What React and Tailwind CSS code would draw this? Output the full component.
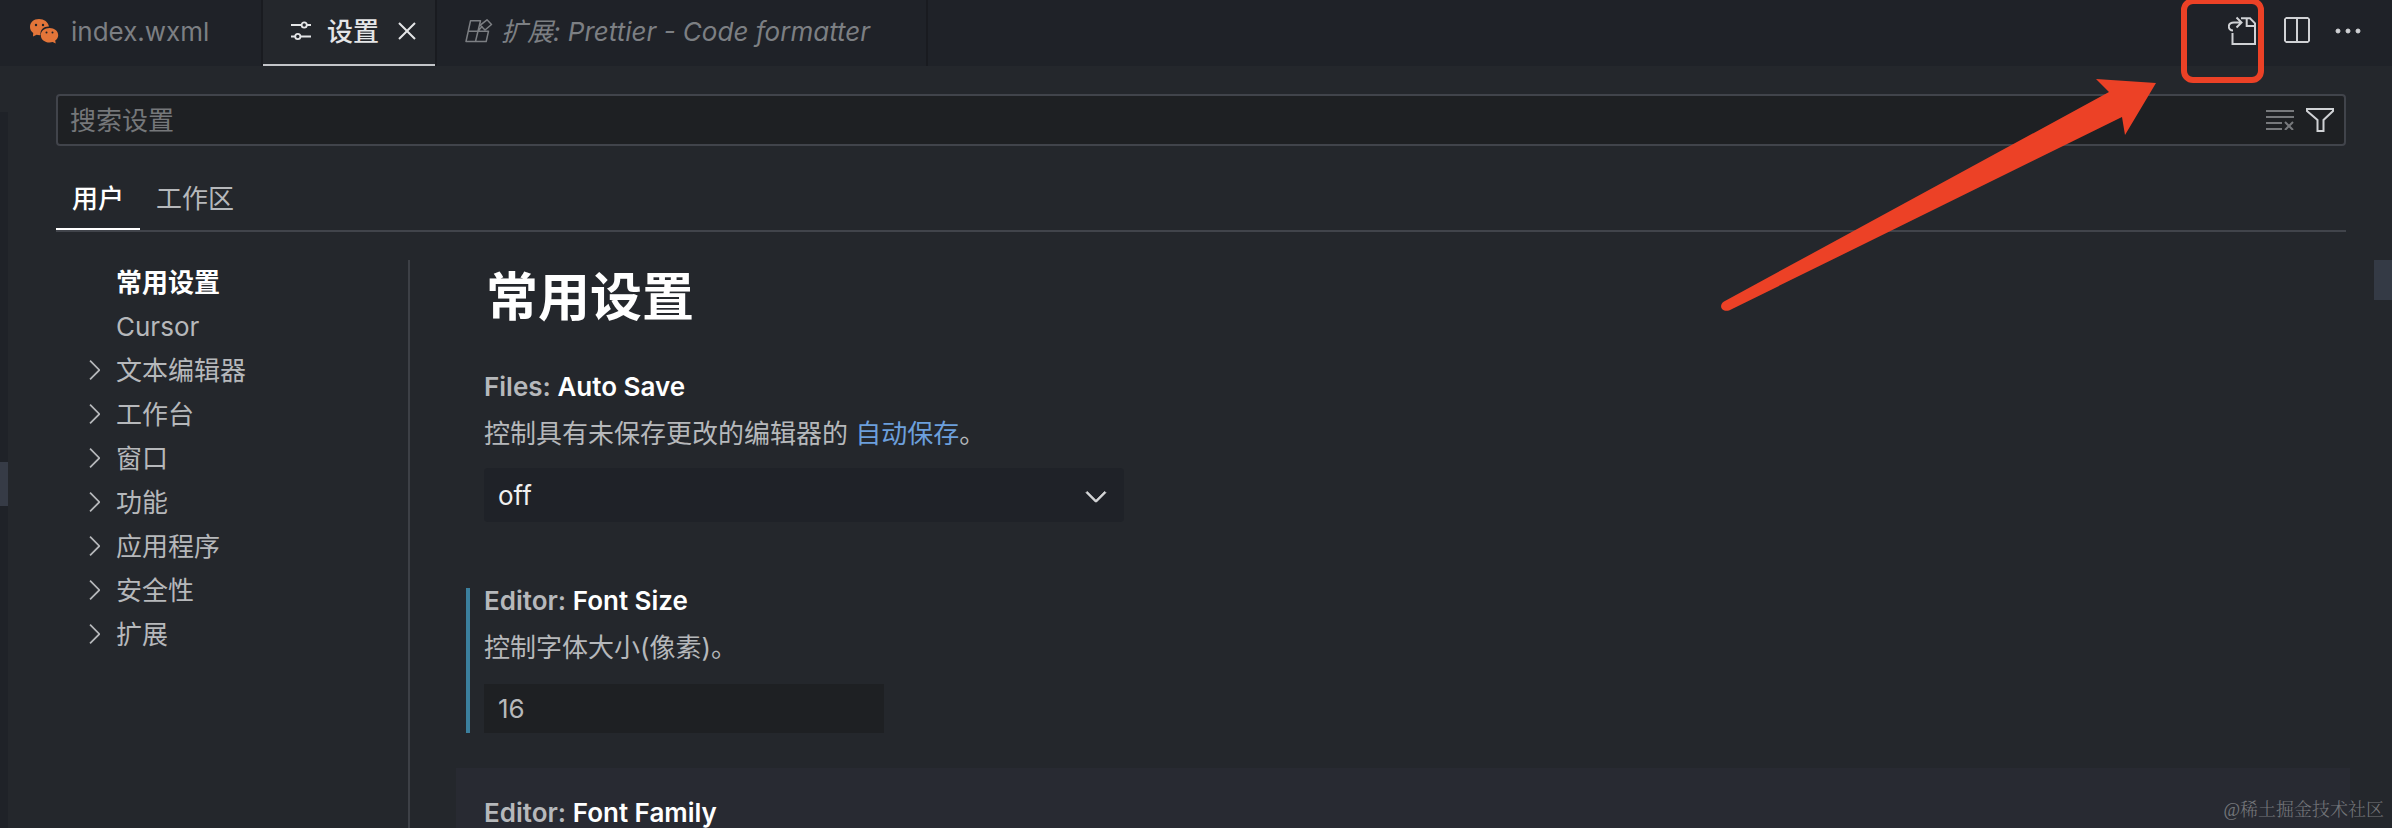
import React, { useState } from "react";
import { VscChevronRight, VscChevronDown, VscClose, VscSplitHorizontal, VscEllipsis } from "react-icons/vsc";

const treeItems = [
  { name: "常用设置", active: true },
  { name: "Cursor" },
  { name: "文本编辑器", children: true },
  { name: "工作台", children: true },
  { name: "窗口", children: true },
  { name: "功能", children: true },
  { name: "应用程序", children: true },
  { name: "安全性", children: true },
  { name: "扩展", children: true },
];

const WechatIcon = () => (
  <svg width="30" height="28" viewBox="0 0 30 28" fill="#e37539">
    <path d="M10 2C4.500 2 1 5.500 1 10c0 2.600 1.300 4.600 3.200 6L4 19.500l3.600-1.800c1.200.4 2.600.5 3.900.4C10.800 12.500 15 9.300 20 9.500 19.300 5 15 2 10 2z" />
    <path d="M20.500 11c-5 0-8.700 3-8.700 7.200 0 4.300 3.900 7.300 8.700 7.300 1.100 0 2.200-.2 3.200-.5l3 1.500-.5-3c1.900-1.300 3-3.100 3-5.300 0-4.200-3.800-7.200-8.700-7.200z" />
    <g fill="#1f2228">
      <circle cx="7" cy="8" r="1.200" />
      <circle cx="14" cy="8" r="1.200" />
      <circle cx="17.500" cy="15.500" r="1" />
      <circle cx="23.500" cy="15.500" r="1" />
    </g>
  </svg>
);

const SlidersIcon = () => (
  <svg width="20" height="20" viewBox="0 0 20 20" fill="none" stroke="currentColor" strokeWidth="1.800">
    <path d="M0 4h10.500M16 4h4M0 15.500h4M9.500 15.500H20" />
    <circle cx="13.200" cy="4" r="2.600" />
    <circle cx="6.800" cy="15.500" r="2.600" />
  </svg>
);

const ExtensionsIcon = () => (
  <svg width="28" height="24" viewBox="0 0 28 24" fill="none" stroke="currentColor" strokeWidth="1.500" strokeLinejoin="round">
    <path d="M5.500 1.800h10L10.500 22.500H1zM3.200 12.200H23.500l-2.300 10.300H10.500M12.800 12.200l4.500-5" />
    <path d="M22 .8l4.500 4.700-6.500 5.500-4.700-4.800z" />
  </svg>
);

const GoToFileIcon = () => (
  <svg width="32" height="32" viewBox="0 0 32 32" fill="none" stroke="currentColor" strokeWidth="2">
    <path d="M13 3.300h9l5 5V29H4.500V18" />
    <path d="M18.700 3v8H27" />
    <path d="M8.500 2.500l5 5-5 5M13 7.500H6C-1 7.500-.5 15.500 5 15.500" />
  </svg>
);

const ClearIcon = () => (
  <svg width="28" height="20" viewBox="0 0 28 20" fill="none" stroke="currentColor" strokeWidth="2">
    <path d="M0 1h28M0 7h28M0 13h16M0 19h16M19 12l8 8M27 12l-8 8" />
  </svg>
);

const FilterIcon = () => (
  <svg width="28" height="24" viewBox="0 0 28 24" fill="none" stroke="currentColor" strokeWidth="2">
    <path d="M1 1h26v2l-9.500 9v11h-6V12L1 3z" />
  </svg>
);

const SettingTitle = ({ category, label, htmlFor }) => (
  <label htmlFor={htmlFor} className="block font-semibold leading-[26px] text-[#b6b8bb]">
    {category}: <span className="text-white">{label}</span>
  </label>
);

const EditorTabs = () => (
  <header className="flex h-[66px] shrink-0 bg-[#1f2228] text-[#7c7f83]">
    <button type="button" className="flex w-[263px] items-center gap-3 border-r-2 border-[#191b20] pb-1 pl-[29px]">
      <WechatIcon />
      index.wxml
    </button>
    <button type="button" className="flex w-[172px] items-center border-b-2 border-[#c3c5c9] bg-[#24272c] pb-[2px] pl-7 text-[#e4e5e7]">
      <SlidersIcon />
      <span className="ml-4 font-medium">设置</span>
      <VscClose className="ml-3 size-8" />
    </button>
    <button type="button" className="flex w-[493px] items-center gap-2 border-x-2 border-[#191b20] pb-1 pl-7 italic">
      <ExtensionsIcon />
      扩展: Prettier - Code formatter
    </button>
    <div className="ml-auto flex items-center gap-5 pb-1 pr-7 text-[#d0d2d5]">
      <button type="button" aria-label="打开设置(json)"><GoToFileIcon /></button>
      <button type="button" aria-label="向右拆分编辑器"><VscSplitHorizontal className="size-8" /></button>
      <button type="button" aria-label="更多操作..."><VscEllipsis className="size-8" strokeWidth="0.5" /></button>
    </div>
  </header>
);

const SettingsTree = () => (
  <nav className="w-[354px] shrink-0 border-r-2 border-[#3d4046]">
    <ul>
      {treeItems.map((item) => (
        <li key={item.name}>
          <button
            type="button"
            className={item.active ? "flex h-11 items-center font-bold text-white" : "flex h-11 items-center text-[#b6b8bb]"}
          >
            <span className="flex w-[60px] justify-end pr-[6px]">
              {item.children && <VscChevronRight className="size-8" />}
            </span>
            {item.name}
          </button>
        </li>
      ))}
    </ul>
  </nav>
);

const SettingsList = () => {
  const [autoSave, setAutoSave] = useState("off");
  const [fontSize, setFontSize] = useState("16");

  return (
    <main className="ml-[46px] min-w-0 grow text-[#b6b8bb]">
      <h1 className="pl-[30px] pt-[6px] text-[52px] font-bold leading-[64px] text-white">常用设置</h1>

      <section className="mt-11 pl-7">
        <SettingTitle category="Files" label="Auto Save" htmlFor="autoSave" />
        <p className="mt-[18px] leading-8">
          控制具有未保存更改的编辑器的 <a href="#auto-save" className="text-[#6c9fdc]">自动保存</a>。
        </p>
        <div className="relative mt-[18px] w-[640px]">
          <select
            id="autoSave"
            value={autoSave}
            onChange={(e) => setAutoSave(e.target.value)}
            className="h-[54px] w-full appearance-none rounded bg-[#1f2228] px-[14px] text-[#f0f0f0]"
          >
            <option value="off">off</option>
            <option value="afterDelay">afterDelay</option>
            <option value="onFocusChange">onFocusChange</option>
            <option value="onWindowChange">onWindowChange</option>
          </select>
          <VscChevronDown className="pointer-events-none absolute right-3 top-3 size-8 text-[#d8d9db]" strokeWidth="0.4" />
        </div>
      </section>

      <section className="ml-[10px] mt-[66px] border-l-4 border-[#3b7f9d] pl-[14px]">
        <SettingTitle category="Editor" label="Font Size" htmlFor="fontSize" />
        <p className="mt-[18px] leading-8">控制字体大小(像素)。</p>
        <input
          id="fontSize"
          type="text"
          value={fontSize}
          onChange={(e) => setFontSize(e.target.value)}
          className="mt-5 block h-[49px] w-[400px] bg-[#1e2023] px-[14px]"
        />
      </section>

      <section className="mr-[42px] mt-[35px] h-40 bg-[#282a32] pl-7 pt-8">
        <SettingTitle category="Editor" label="Font Family" htmlFor="fontFamily" />
        <input id="fontFamily" type="text" className="mt-16 block h-[49px] w-[400px] bg-[#1e2023] px-[14px]" />
      </section>
    </main>
  );
};

const Annotations = () => (
  <>
    <div className="pointer-events-none absolute -top-[2px] right-32 h-[85px] w-[83px] rounded-xl border-[6px] border-[#ec4126]" />
    <svg className="pointer-events-none absolute right-[236px] top-[78px]" width="436" height="236" viewBox="0 0 436 236">
      <path d="M4 223.500L389 14 376 1l60 4-31 52-3-18L9 232.500c-7 2-11-5-5-9z" fill="#ec4126" />
    </svg>
    <div className="pointer-events-none absolute bottom-1 right-2 font-['Liberation_Serif','Noto_Serif_CJK_SC','Noto_Sans_CJK_SC',serif] text-lg font-light text-[#74767a]">
      @稀土掘金技术社区
    </div>
  </>
);

const App = () => {
  const [search, setSearch] = useState("");

  return (
    <div className="relative flex h-screen flex-col overflow-hidden bg-[#24272c] font-[Inter,'Noto_Sans_CJK_SC',sans-serif] text-[26px]">
      <EditorTabs />

      <div className="absolute bottom-0 left-0 top-28 w-2 bg-[#1f2228]">
        <div className="mt-[350px] h-11 bg-[#363b46]" />
      </div>
      <div className="absolute right-0 top-[260px] h-10 w-[18px] bg-[#343a45]" />

      <div className="flex min-h-0 grow flex-col pl-14 pt-7">
        <div className="mr-[46px] flex h-[52px] shrink-0 items-center gap-3 rounded border-2 border-[#41444b] bg-[#1e2023] pl-3 pr-[10px]">
          <input
            type="text"
            aria-label="搜索设置"
            placeholder="搜索设置"
            value={search}
            onChange={(e) => setSearch(e.target.value)}
            className="min-w-0 grow bg-transparent outline-none placeholder:text-[#75777a]"
          />
          <button type="button" aria-label="清除设置搜索输入" className="text-[#77797c]"><ClearIcon /></button>
          <button type="button" aria-label="筛选设置" className="text-[#d0d2d5]"><FilterIcon /></button>
        </div>

        <div className="mr-[46px] mt-5 flex h-[66px] shrink-0 border-b-2 border-[#41444b]">
          <button type="button" className="w-[84px] border-b-2 border-white pt-[2px] font-medium text-white">用户</button>
          <button type="button" className="ml-4 text-[#b6b8bb]">工作区</button>
        </div>

        <div className="flex min-h-0 grow pt-7">
          <SettingsTree />
          <SettingsList />
        </div>
      </div>

      <Annotations />
    </div>
  );
};

export default App;
